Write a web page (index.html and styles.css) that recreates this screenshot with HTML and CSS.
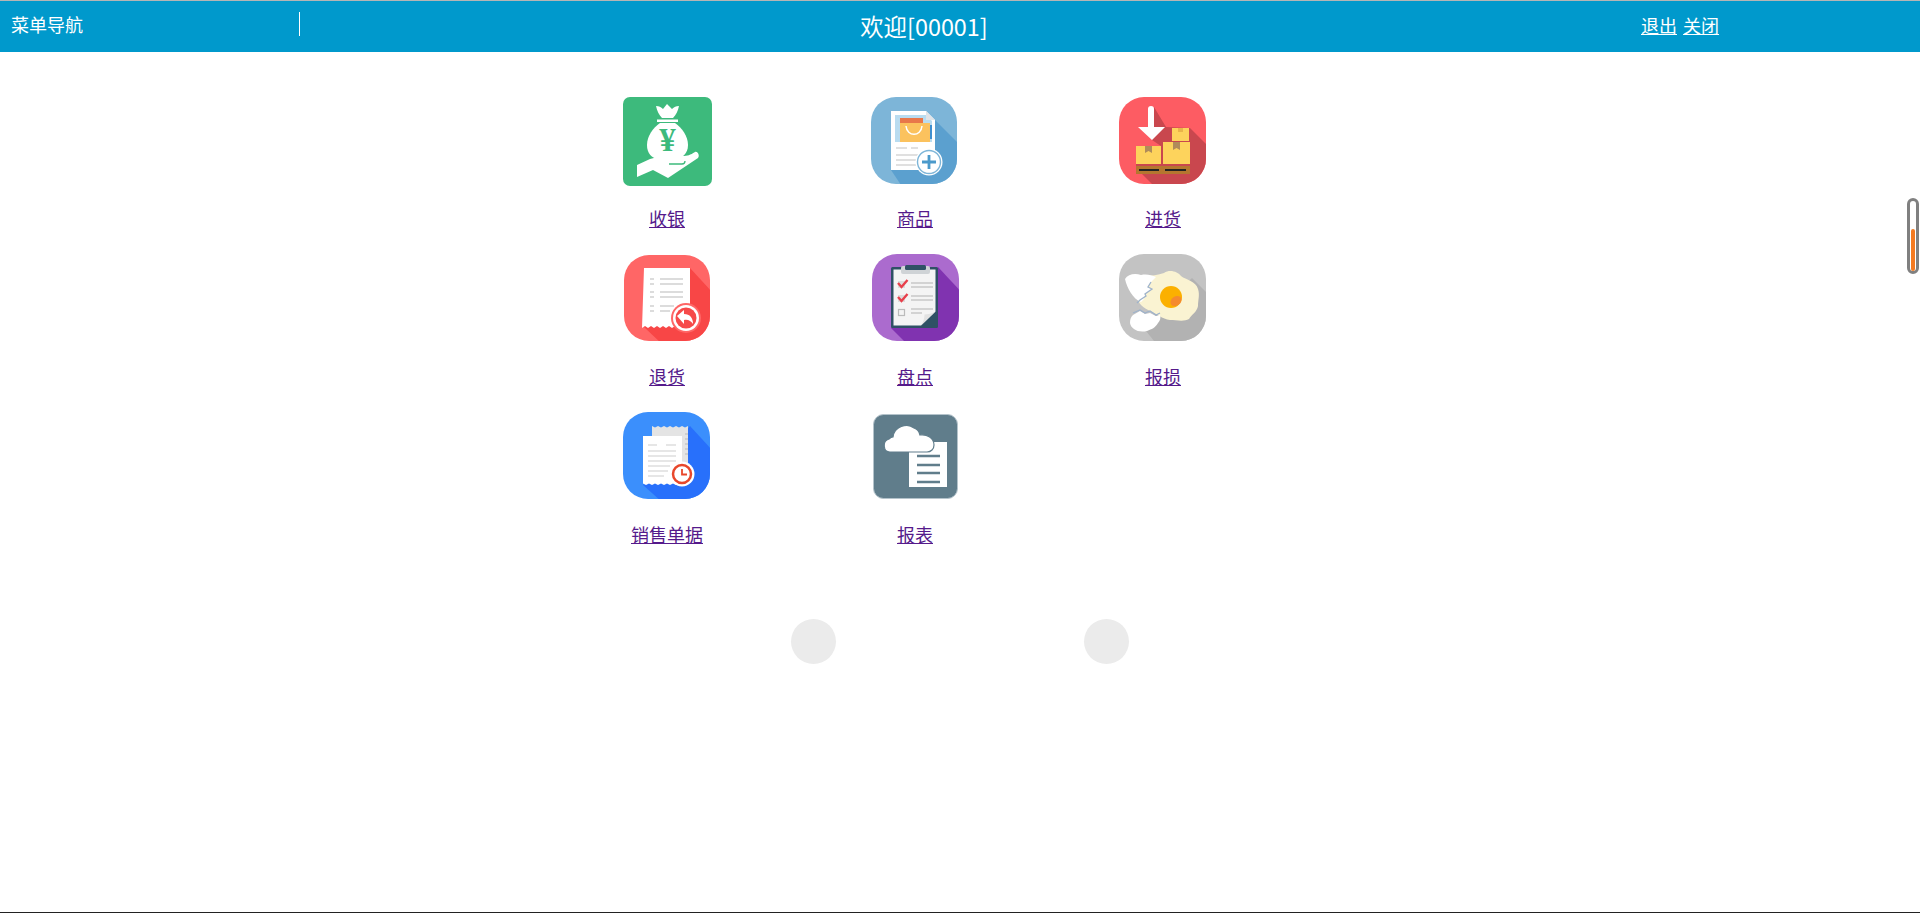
FILE: index.html
```html
<!DOCTYPE html>
<html lang="zh-CN">
<head>
<meta charset="utf-8">
<title>菜单导航</title>
<link rel="stylesheet" href="styles.css">
</head>
<body>
<div class="page">
  <header class="topbar">
    <div class="nav-title">菜单导航</div>
    <div class="welcome">欢迎[00001]</div>
    <div class="actions"><a href="#" class="action">退出</a> <a href="#" class="action">关闭</a></div>
  </header>
  <main class="menu">
    <div class="tile">
      <svg class="icon" viewBox="0 0 90 90">
        <rect x="1" y="1" width="89" height="89" rx="7" fill="#3dba7c"/>
        <path d="M34 10c3 0 5 1 7 3l4-5 5 5c2-2 4-3 7-3-1 5-3 9-6 12H40c-3-3-5-7-6-12z" fill="#fff"/>
        <rect x="35" y="23.500" width="21" height="2.500" fill="#fff"/>
        <path d="M38 27h15c7 5 13 13 13 22 0 9-6 13-12 14H36c-6-1-11-5-11-14 0-9 6-17 13-22z" fill="#fff"/>
        <text x="45.500" y="55" class="yen">¥</text>
        <path d="M15 69l13-6c10-3 22-3 32-3 6 0 8-1 13-4 3-1 5 4 3 6L46 82 31 74l-16 7z" fill="#fff"/>
        <path d="M47 68h13c2 0 3-1 3-3" stroke="#3dba7c" stroke-width="1.300" fill="none"/>
      </svg>
      <a href="#" class="label">收银</a>
    </div>
    <div class="tile">
      <svg class="icon" viewBox="0 0 90 90">
        <defs><clipPath id="c2"><rect x="1" y="1" width="86" height="87" rx="25"/></clipPath></defs>
        <rect x="1" y="1" width="86" height="87" rx="25" fill="#7db5d8"/>
        <path d="M65 24l30 30v41H35L21 74z" fill="#5ba0cf" clip-path="url(#c2)"/>
        <path d="M21 15h35l9 9v50H21z" fill="#fff"/>
        <path d="M25 19h31l6 6v21H25z" fill="#b9dcf0"/>
        <path d="M30 27h30v19H30z" fill="#fbc25e"/>
        <path d="M30 22h23v5H30z" fill="#e8774a"/>
        <path d="M36 30c1 11 15 11 16 0" fill="none" stroke="#fff" stroke-width="1.500"/>
        <path d="M56 15l9 9h-9z" fill="#e0e4e8"/>
        <path d="M60 29h2v14h-2z" fill="#3f8fcf"/>
        <path d="M26 52h11M41 52h7M26 59h27M26 64h24M26 69h24" stroke="#d6d6d6" stroke-width="1.500"/>
        <circle cx="59" cy="66" r="13.500" fill="#fff"/>
        <circle cx="59" cy="66" r="11.500" fill="#fff" stroke="#7db5d8" stroke-width="1.400"/>
        <path d="M59 59v14M52 66h14" stroke="#4b9acb" stroke-width="2.800"/>
      </svg>
      <a href="#" class="label">商品</a>
    </div>
    <div class="tile">
      <svg class="icon" viewBox="0 0 90 90">
        <defs><clipPath id="c3"><rect x="1" y="1" width="87" height="87" rx="25"/></clipPath></defs>
        <rect x="1" y="1" width="87" height="87" rx="25" fill="#fd5c63"/>
        <path d="M36 11L48 31 72 32 92 52 92 92 38 92 18 72 18 50 43 50 34 44z" fill="#c9474e" clip-path="url(#c3)"/>
        <path d="M30 13a3 3 0 0 1 6 0v18h11L34 44 20 31h10z" fill="#fff"/>
        <rect x="18" y="50" width="25" height="18" fill="#fdd35c"/>
        <path d="M27 50h7v7l-3.500-2-3.500 2z" fill="#b08c5a"/>
        <rect x="45" y="46" width="27" height="22" fill="#fdd35c"/>
        <path d="M55 46h7v8l-3.500-2-3.500 2z" fill="#b08c5a"/>
        <rect x="54" y="32" width="17" height="13" fill="#fdd35c"/>
        <rect x="60" y="32" width="5" height="4" fill="#e9b44a"/>
        <rect x="18" y="70" width="54" height="8" fill="#b5762f"/>
        <path d="M21 74h20M47 74h21" stroke="#222" stroke-width="2"/>
      </svg>
      <a href="#" class="label">进货</a>
    </div>
    <div class="tile">
      <svg class="icon" viewBox="0 0 90 90">
        <defs><clipPath id="c4"><rect x="2" y="1" width="86" height="86" rx="25"/></clipPath></defs>
        <rect x="2" y="1" width="86" height="86" rx="25" fill="#ff6666"/>
        <path d="M68 14l24 26v50H40L22 73z" fill="#f84646" clip-path="url(#c4)"/>
        <path d="M22 14h46v60l-3-2-3 2-3-2-3 2-3-2-3 2-3-2-3 2-3-2-3 2-3-2-3 2-3-2-3 2-3-2-3 2z" fill="#fff"/>
        <path d="M28 25h4M38 25h23M28 30h4M38 30h23M28 38h4M38 38h23M28 43h4M38 43h23M28 52h4M38 52h14M28 57h4M38 57h10" stroke="#dcdcdc" stroke-width="2"/>
        <circle cx="64" cy="64" r="15" fill="#ff6666"/>
        <circle cx="64" cy="64" r="13" fill="#fff"/>
        <circle cx="64" cy="64" r="10.500" fill="#f64a4a"/>
        <path d="M55 62l7-6v4c6 0 9 4 9 10-2-3-5-5-9-4v4z" fill="#fff"/>
      </svg>
      <a href="#" class="label">退货</a>
    </div>
    <div class="tile">
      <svg class="icon" viewBox="0 0 90 90">
        <defs><clipPath id="c5"><rect x="2" y="0" width="87" height="87" rx="25"/></clipPath></defs>
        <rect x="2" y="0" width="87" height="87" rx="25" fill="#ab6bce"/>
        <path d="M68 13l26 28v50H38L21 74z" fill="#8033b0" clip-path="url(#c5)"/>
        <rect x="21" y="13" width="47" height="61" rx="1.500" fill="#2f5165"/>
        <path d="M23.500 15.500h42v42L51 71.500H23.500z" fill="#f4f4f4"/>
        <path d="M51 71.500l14.500-14c-3 2-8 3-11 3 0 4-1.500 8-3.500 11z" fill="#e2e2e2"/>
        <rect x="31" y="12" width="29" height="8" rx="2" fill="#cfd3d6"/>
        <rect x="35" y="11" width="21" height="5" rx="1.500" fill="#2f5165"/>
        <rect x="28" y="27" width="7" height="7" fill="#dcdcdc"/>
        <rect x="28" y="41" width="7" height="7" fill="#dcdcdc"/>
        <rect x="28.500" y="55.500" width="6" height="6" fill="none" stroke="#bbb" stroke-width="1.200"/>
        <path d="M28 29l3.500 4 6-7M28 43l3.500 4 6-7" fill="none" stroke="#e8404c" stroke-width="2.400"/>
        <path d="M41 29h22M41 33h22M41 42h22M41 46h22M41 55h22M41 59h11" stroke="#c8c8c8" stroke-width="1.300"/>
      </svg>
      <a href="#" class="label">盘点</a>
    </div>
    <div class="tile">
      <svg class="icon" viewBox="0 0 90 90">
        <defs><clipPath id="c6"><rect x="1" y="0" width="87" height="87" rx="25"/></clipPath></defs>
        <rect x="1" y="0" width="87" height="87" rx="25" fill="#c3c3c3"/>
        <path d="M74 24l28 28v40H40L24 72z" fill="#b2b2b2" clip-path="url(#c6)"/>
        <path d="M26 22c8 0 14-1 20-3 6-4 14-1 17 3 5 4 15 5 17 13 2 6 0 11 0 17-1 6-6 8-9 13-5 3-13 1-19 1-8-1-13-6-20-9-6-3-13-7-13-16 0-8 3-14 7-19z" fill="#faf3d2"/>
        <path d="M7 25c3-5 10-6 16-4 6-1 10 0 15 2l-5 5-3 5 4 2-7 5-1 5-3 3c-8-3-14-14-16-23z" fill="#fff"/>
        <path d="M15 61l7-4 5 3 5-1 6 3 4-1c1 3 0 6-2 8-3 5-6 6-11 8-9 2-16-2-17-8 0-4 1-6 3-8z" fill="#fff"/>
        <path d="M33 28l-3 5 4 2-7 5 1 2-6 4-3 3M15 59l7-3 5 3 5-2 6 4 4-2" fill="none" stroke="#9fb3cb" stroke-width="1.300"/>
        <circle cx="53" cy="43" r="11" fill="#fbb000"/>
        <ellipse cx="58" cy="47" rx="6" ry="4.500" fill="#f58a2e" transform="rotate(-35 58 47)"/>
      </svg>
      <a href="#" class="label">报损</a>
    </div>
    <div class="tile">
      <svg class="icon" viewBox="0 0 90 90">
        <defs><clipPath id="c7"><rect x="1" y="0" width="87" height="87" rx="25"/></clipPath></defs>
        <rect x="1" y="0" width="87" height="87" rx="25" fill="#3b8ffc"/>
        <path d="M68 14l24 26v50H40L21 73z" fill="#2870fb" clip-path="url(#c7)"/>
        <path d="M30 14l3 1.500 3-1.500 3 1.500 3-1.500 3 1.500 3-1.500 3 1.500 3-1.500 3 1.500 3-1.500 3 1.500 3-1.500v38H30z" fill="#e4e4e4"/>
        <path d="M63 22h3M63 27h3M63 32h3M63 37h3M63 42h3" stroke="#c8c8c8" stroke-width="1.300"/>
        <path d="M21 24h39v49l-3-1.500-3 1.500-3-1.500-3 1.500-3-1.500-3 1.500-3-1.500-3 1.500-3-1.500-3 1.500-3-1.500-3 1.500-3-1.500z" fill="#fff"/>
        <path d="M26 33h9M44 33h10M26 39h28M26 44h28M26 49h28M26 54h22M26 59h20M26 64h16" stroke="#dedede" stroke-width="1.300"/>
        <circle cx="60" cy="62" r="12.500" fill="#fff"/>
        <circle cx="60" cy="62" r="9" fill="#fff" stroke="#e8472b" stroke-width="2.500"/>
        <path d="M60 57v5.500h5" fill="none" stroke="#e8472b" stroke-width="1.800"/>
      </svg>
      <a href="#" class="label">销售单据</a>
    </div>
    <div class="tile">
      <svg class="icon" viewBox="0 0 90 90">
        <rect x="3.500" y="2.500" width="84" height="84" rx="10" fill="#607d8b" stroke="#b4c3cb" stroke-width="1"/>
        <path d="M39 30h38v45H39z" fill="#fff"/>
        <path d="M47 44h23M47 53h23M47 61h23M47 70h23" stroke="#607d8b" stroke-width="2.600"/>
        <path d="M20 40c-7 0-8-11-1-13 1-1 3-2 4-2 1-10 14-15 21-9 3 1 5 3 6 7 7-1 14 3 14 10 0 4-3 7-7 7z" fill="#fff" stroke="#607d8b" stroke-width="1.200"/>
      </svg>
      <a href="#" class="label">报表</a>
    </div>
  </main>
  <div class="dots">
    <span class="dot"></span>
    <span class="dot"></span>
  </div>
  <footer class="bottom-line"></footer>
</div>
<div class="gauge"><span class="gauge-fill"></span></div>
</body>
</html>
```

FILE: styles.css
```css
* {
  box-sizing: border-box;
}

html,
body {
  margin: 0;
  height: 100%;
  overflow: hidden;
  background: #fff;
}

body {
  font-family: "Noto Sans CJK SC", "Liberation Sans", sans-serif;
}

.page {
  height: 914px;
  display: flex;
  flex-direction: column;
}

.topbar {
  height: 52px;
  flex: none;
  display: flex;
  align-items: flex-start;
  background: #0099cc;
  border-top: 1px solid #b5b5b5;
  color: #fff;
}

.nav-title {
  width: 300px;
  height: 24px;
  flex: none;
  margin-top: 11px;
  padding-left: 11px;
  border-right: 1px solid #fff;
  font-size: 18px;
  line-height: 24px;
}

.welcome {
  width: 1248px;
  flex: none;
  margin-top: 9px;
  text-align: center;
  font-size: 23.4px;
  line-height: 32px;
}

.actions {
  margin-top: 12px;
  padding-left: 93px;
  font-size: 18px;
  line-height: 24px;
  white-space: nowrap;
  word-spacing: 2px;
}

.action {
  color: #fff;
  text-decoration: underline;
}

.menu {
  width: 744px;
  margin: 44px 0 0 543px;
  display: grid;
  grid-template-columns: repeat(3, 248px);
  grid-auto-rows: 158px;
}

.tile {
  display: flex;
  flex-direction: column;
  align-items: center;
}

.icon {
  width: 90px;
  height: 90px;
  display: block;
  flex: none;
}

.yen {
  font-family: "Liberation Serif", serif;
  font-size: 33px;
  font-weight: bold;
  fill: #3dba7c;
  text-anchor: middle;
}

.label {
  margin-top: 20px;
  color: #551a8b;
  font-size: 18px;
  line-height: 24px;
  text-decoration: underline;
}

.dots {
  margin: 49px 0 0 791px;
  display: flex;
  gap: 248px;
}

.dot {
  width: 45px;
  height: 45px;
  border-radius: 50%;
  background: #ebebeb;
}

.bottom-line {
  margin-top: auto;
  height: 2px;
  border-top: 1px solid #222;
}

.gauge {
  position: absolute;
  left: 1907px;
  top: 198px;
  width: 12px;
  height: 76px;
  border: 3px solid #808080;
  border-radius: 6px;
  background: #fff;
}

.gauge-fill {
  position: absolute;
  left: 1px;
  right: 1px;
  top: 28px;
  bottom: 0;
  background: #f47a20;
  border-radius: 2px;
}
```
